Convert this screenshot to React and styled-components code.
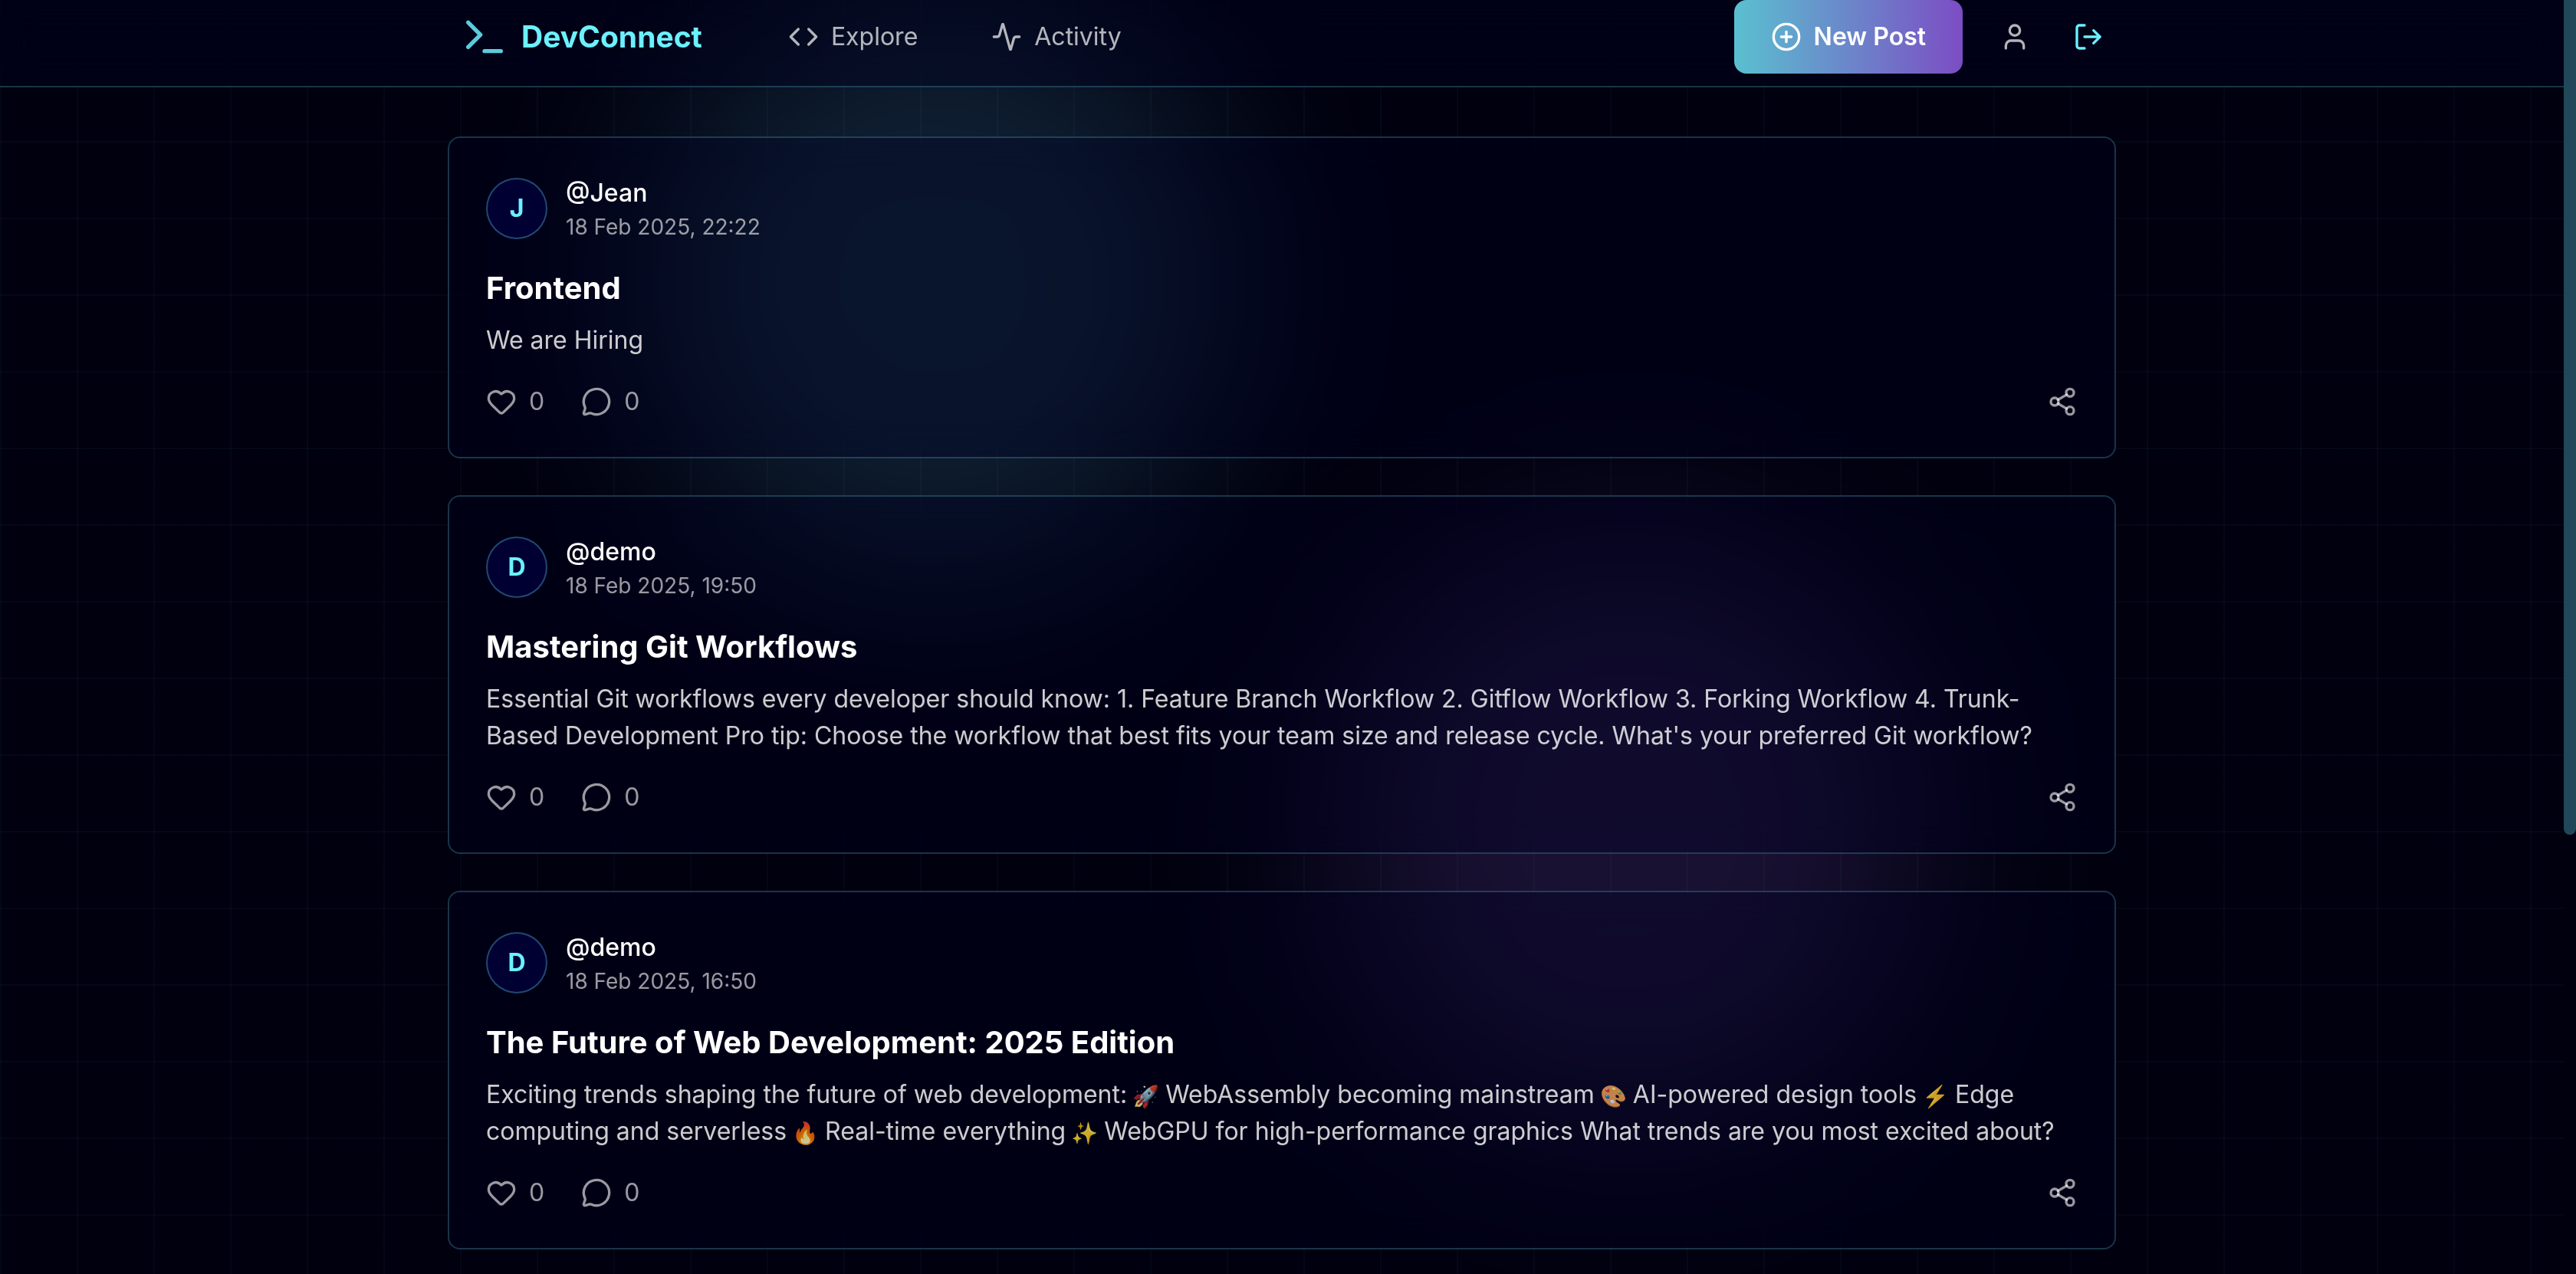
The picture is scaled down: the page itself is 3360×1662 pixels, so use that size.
import React from "react";
import styled, { createGlobalStyle } from "styled-components";
import {
  Activity,
  CirclePlus,
  Code,
  Heart,
  LogOut,
  MessageCircle,
  Share2,
  Terminal,
  User,
} from "lucide-react";

const cyan = "#6cf0ff";
const line = "rgba(108, 240, 255, 0.22)";

const GlobalStyle = createGlobalStyle`
  *, *::before, *::after { box-sizing: border-box; }
  body {
    margin: 0;
    background: #00000f;
    color: #fff;
    font-family: Inter, "Noto Sans", "Noto Color Emoji", sans-serif;
    font-size: 32px;
    line-height: 48px;
    -webkit-font-smoothing: antialiased;
  }
  h2, p { margin: 0; }
  button { font: inherit; border: 0; background: none; padding: 0; cursor: pointer; }
  a { color: inherit; text-decoration: none; }
  svg { display: block; flex-shrink: 0; }
`;

const Page = styled.div`
  display: grid;
  grid-template-columns: minmax(0, 1fr) 16px;
  height: 100vh;
  overflow: hidden;
`;

const Backdrop = styled.div`
  position: fixed;
  inset: 0 16px 0 0;
  overflow: hidden;
  z-index: -1;
  &::after {
    content: "";
    position: absolute;
    inset: 0;
    background-image:
      linear-gradient(rgba(108, 240, 255, 0.03) 2px, transparent 2px),
      linear-gradient(90deg, rgba(108, 240, 255, 0.03) 2px, transparent 2px);
    background-size: 100px 100px;
    background-position: 0 84px;
  }
`;

const Glow = styled.div`
  position: absolute;
  width: 768px;
  height: 768px;
  border-radius: 50%;
  filter: blur(128px);
  background: ${(p) => p.$color};
  top: ${(p) => p.$top};
  left: ${(p) => p.$left};
  right: ${(p) => p.$right};
`;

const Content = styled.div`
  min-width: 0;
`;

const Header = styled.header`
  padding-bottom: 16px;
  border-bottom: 2px solid ${line};
  background: rgba(0, 0, 32, 0.4);
  backdrop-filter: blur(24px);
`;

const HeaderRow = styled.div`
  display: flex;
  align-items: center;
  justify-content: space-between;
  max-width: 2176px;
  margin: 0 auto;
  padding: 0 16px;
`;

const Side = styled.div`
  display: flex;
  align-items: center;
  gap: ${(p) => p.$gap};
`;

const Logo = styled.a`
  display: flex;
  align-items: center;
  gap: 16px;
  color: ${cyan};
  font-size: 39px;
  font-weight: 700;
  line-height: 56px;
  svg { opacity: 0.85; }
`;

const Nav = styled.nav`
  display: flex;
  gap: 96px;
`;

const NavLink = styled.a`
  display: flex;
  align-items: center;
  gap: 16px;
  color: rgba(255, 255, 255, 0.7);
`;

const NewPost = styled.button`
  display: flex;
  align-items: center;
  gap: 16px;
  height: 96px;
  padding: 0 48px;
  border-radius: 16px;
  color: #fff;
  font-weight: 600;
  background: linear-gradient(90deg, #5ac0d0, #7c4dc4);
`;

const IconButton = styled.button`
  display: flex;
  color: ${(p) => (p.$accent ? cyan : "rgba(255, 255, 255, 0.7)")};
`;

const Feed = styled.main`
  display: flex;
  flex-direction: column;
  gap: 48px;
  max-width: 2176px;
  margin: 64px auto 0;
`;

const Card = styled.article`
  padding: 48px;
  border: 2px solid ${line};
  border-radius: 16px;
  background: rgba(0, 0, 34, 0.34);
  backdrop-filter: blur(24px);
`;

const Author = styled.div`
  display: flex;
  align-items: center;
  gap: 24px;
`;

const Avatar = styled.div`
  display: grid;
  place-items: center;
  width: 80px;
  height: 80px;
  border: 2px solid rgba(108, 240, 255, 0.3);
  border-radius: 50%;
  background: #000033;
  color: ${cyan};
  font-weight: 700;
`;

const Name = styled.div`
  font-weight: 500;
`;

const Stamp = styled.time`
  display: block;
  font-size: 28px;
  line-height: 40px;
  color: rgba(255, 255, 255, 0.6);
`;

const Title = styled.h2`
  margin-top: 32px;
  font-size: 40px;
  font-weight: 700;
  line-height: 56px;
`;

const Body = styled.p`
  margin-top: 16px;
  color: rgba(255, 255, 255, 0.8);
`;

const Emoji = styled.span`
  display: inline-flex;
  align-items: center;
  justify-content: center;
  width: 32px;
  height: 32px;
  font-size: 28px;
  line-height: 32px;
  vertical-align: middle;
`;

const Actions = styled.div`
  display: flex;
  align-items: center;
  gap: 48px;
  margin-top: 32px;
`;

const Action = styled.button`
  display: flex;
  align-items: center;
  gap: 16px;
  color: rgba(255, 255, 255, 0.6);
  &:last-child { margin-left: auto; }
`;

const ScrollTrack = styled.div`
  height: 100vh;
`;

const ScrollThumb = styled.div`
  height: 65.5%;
  border-radius: 0 0 8px 8px;
  background: #20485a;
`;

const posts = [
  { user: "Jean", date: "18 Feb 2025, 22:22", title: "Frontend", text: "We are Hiring" },
  {
    user: "demo",
    date: "18 Feb 2025, 19:50",
    title: "Mastering Git Workflows",
    text: "Essential Git workflows every developer should know: 1. Feature Branch Workflow 2. Gitflow Workflow 3. Forking Workflow 4. Trunk-Based Development Pro tip: Choose the workflow that best fits your team size and release cycle. What's your preferred Git workflow?",
  },
  {
    user: "demo",
    date: "18 Feb 2025, 16:50",
    title: "The Future of Web Development: 2025 Edition",
    text: "Exciting trends shaping the future of web development: 🚀 WebAssembly becoming mainstream 🎨 AI-powered design tools ⚡ Edge computing and serverless 🔥 Real-time everything ✨ WebGPU for high-performance graphics What trends are you most excited about?",
  },
];

function withEmoji(text) {
  return text
    .split(/(\p{Emoji_Presentation})/u)
    .map((part, i) => (i % 2 ? <Emoji key={i}>{part}</Emoji> : part));
}

function Post({ user, date, title, text }) {
  return (
    <Card>
      <Author>
        <Avatar>{user[0].toUpperCase()}</Avatar>
        <div>
          <Name>@{user}</Name>
          <Stamp>{date}</Stamp>
        </div>
      </Author>
      <Title>{title}</Title>
      <Body>{withEmoji(text)}</Body>
      <Actions>
        <Action aria-label="Like"><Heart size={40} />0</Action>
        <Action aria-label="Comment"><MessageCircle size={40} />0</Action>
        <Action aria-label="Share"><Share2 size={40} /></Action>
      </Actions>
    </Card>
  );
}

export default function App() {
  return (
    <>
      <GlobalStyle />
      <Backdrop>
        <Glow $color="rgba(98, 214, 255, 0.15)" $top="-16px" $left="25%" />
        <Glow $color="rgba(170, 116, 255, 0.15)" $top="700px" $right="25%" />
      </Backdrop>
      <Page>
        <Content>
          <Header>
            <HeaderRow>
              <Side $gap="112px">
                <Logo href="#"><Terminal size={64} />DevConnect</Logo>
                <Nav>
                  <NavLink href="#"><Code size={40} />Explore</NavLink>
                  <NavLink href="#"><Activity size={40} />Activity</NavLink>
                </Nav>
              </Side>
              <Side $gap="48px">
                <NewPost><CirclePlus size={40} />New Post</NewPost>
                <Side $gap="56px">
                  <IconButton aria-label="Profile"><User size={40} /></IconButton>
                  <IconButton aria-label="Log out" $accent><LogOut size={40} /></IconButton>
                </Side>
              </Side>
            </HeaderRow>
          </Header>
          <Feed>
            {posts.map((p) => <Post key={p.date} {...p} />)}
          </Feed>
        </Content>
        <ScrollTrack aria-hidden="true"><ScrollThumb /></ScrollTrack>
      </Page>
    </>
  );
}
